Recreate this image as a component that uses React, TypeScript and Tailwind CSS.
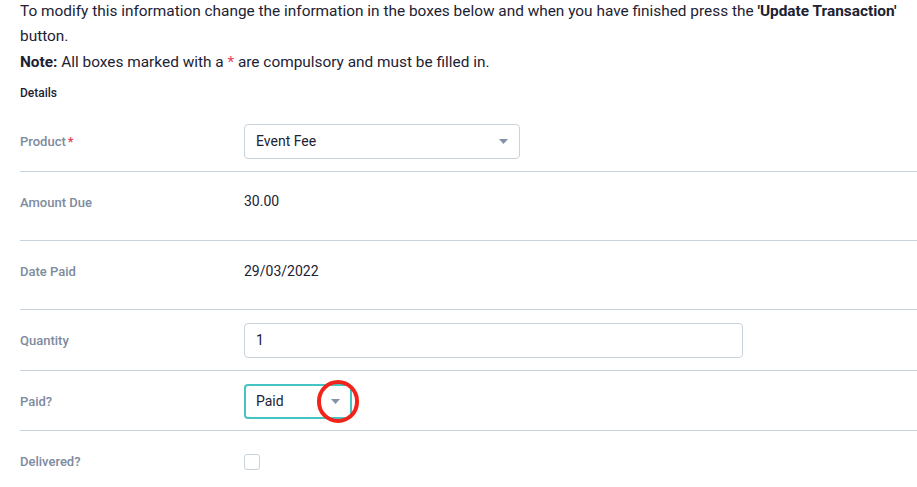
import React from 'react';

const font = { fontFamily: 'Roboto, "Liberation Sans", sans-serif' };

const Caret = () => (
  <svg className="w-[9px] h-[5px]" viewBox="0 0 9 5" fill="#8492a6"><path d="M0 0h9L4.5 5z" /></svg>
);

const Row: React.FC<{ label: React.ReactNode; children: React.ReactNode; pb?: string }> = ({ label, children, pb = 'pb-[12px]' }) => (
  <div className={`flex border-b border-[#c9d3dd] pt-[13px] ${pb}`}>
    <div className="w-[224px] h-[35px] flex items-center text-[13px] font-medium text-[#7d8b9e]">{label}</div>
    <div className="h-[35px] flex items-center text-[14px] text-[#1c2233]">{children}</div>
  </div>
);

export default function App() {
  return (
    <div className="w-[917px] h-[487px] overflow-hidden bg-white pl-[20px]" style={font}>
      <div className="text-[15.4px] leading-[25px] text-[#1c2233] -mt-[1px]">
        <p>To modify this information change the information in the boxes below and when you have finished press the <b>'Update Transaction'</b> button.</p>
        <p className="mt-[1px]"><b>Note:</b> All boxes marked with a <span className="text-[#e0405a]">*</span> are compulsory and must be filled in.</p>
      </div>
      <div className="text-[12px] font-medium text-[#1c2233] mt-[10px] mb-[10px] leading-[16px]">Details</div>
      <Row label={<span>Product<span className="text-[#e0405a] ml-[2px]">*</span></span>}>
        <div className="w-[276px] h-[35px] border border-[#c9d3dd] rounded-[4px] flex items-center justify-between pl-[11px] pr-[11px]">
          <span>Event Fee</span>
          <Caret />
        </div>
      </Row>
      <Row label="Amount Due" pb="pb-[20px]"><span className="-mt-[3px]">30.00</span></Row>
      <Row label="Date Paid" pb="pb-[20px]"><span className="-mt-[1px]">29/03/2022</span></Row>
      <Row label="Quantity">
        <div className="w-[499px] h-[35px] border border-[#c9d3dd] rounded-[4px] flex items-center pl-[11px]">1</div>
      </Row>
      <Row label="Paid?" pb="pb-[11px]">
        <div className="relative w-[108px] h-[35px] border-2 border-[#46c4c4] rounded-[4px] flex items-center justify-between pl-[10px] pr-[10px]">
          <span>Paid</span>
          <Caret />
          <div className="absolute left-[71px] top-[-6px] w-[42px] h-[43px] rounded-full border-[4.5px] border-[#f2231b]" />
        </div>
      </Row>
      <div className="flex pt-[23px]">
        <div className="w-[224px] text-[13px] font-medium text-[#7d8b9e] leading-[16px]">Delivered?</div>
        <div className="w-[16px] h-[16px] border border-[#c9d3dd] rounded-[3px]" />
      </div>
    </div>
  );
}
